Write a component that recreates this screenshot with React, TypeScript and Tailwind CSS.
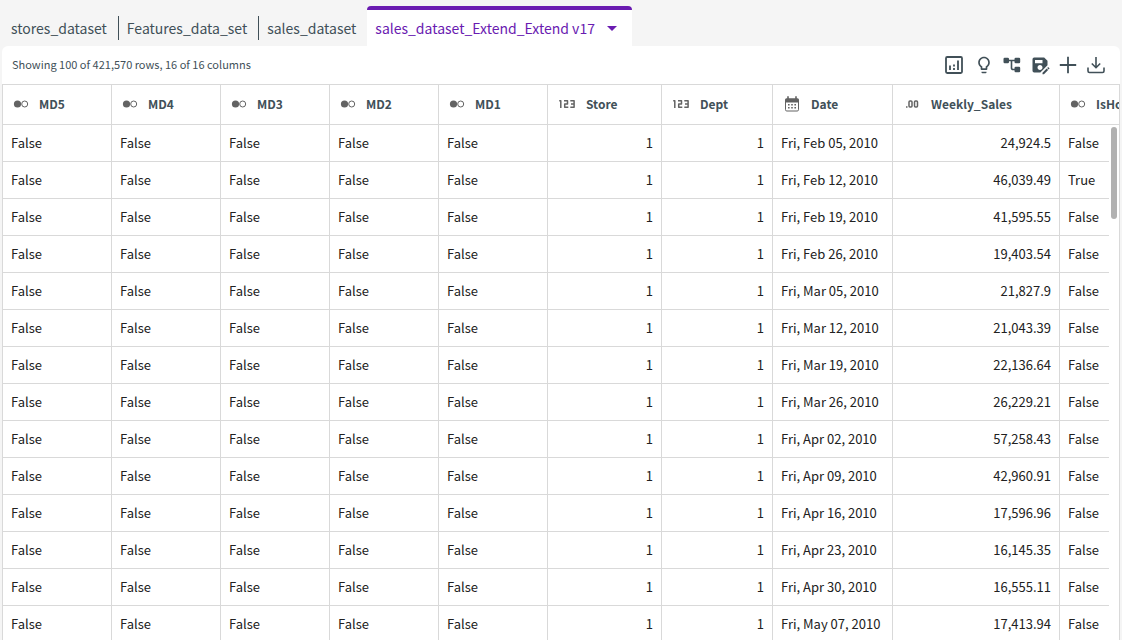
import React, { ReactNode } from "react";
import { MdLightbulbOutline, MdSaveAs } from "react-icons/md";

type ColumnType = "bool" | "int" | "float" | "date";

type Column = {
  name: string;
  type: ColumnType;
  width: string;
};

const columns: Column[] = [
  { name: "MD5", type: "bool", width: "w-[109px]" },
  { name: "MD4", type: "bool", width: "w-[109px]" },
  { name: "MD3", type: "bool", width: "w-[109px]" },
  { name: "MD2", type: "bool", width: "w-[109px]" },
  { name: "MD1", type: "bool", width: "w-[109px]" },
  { name: "Store", type: "int", width: "w-[114px]" },
  { name: "Dept", type: "int", width: "w-[111px]" },
  { name: "Date", type: "date", width: "w-[120px]" },
  { name: "Weekly_Sales", type: "float", width: "w-[167px]" },
  { name: "IsHoliday", type: "bool", width: "" },
];

const sales = [
  ["Fri, Feb 05, 2010", "24,924.5", "False"],
  ["Fri, Feb 12, 2010", "46,039.49", "True"],
  ["Fri, Feb 19, 2010", "41,595.55", "False"],
  ["Fri, Feb 26, 2010", "19,403.54", "False"],
  ["Fri, Mar 05, 2010", "21,827.9", "False"],
  ["Fri, Mar 12, 2010", "21,043.39", "False"],
  ["Fri, Mar 19, 2010", "22,136.64", "False"],
  ["Fri, Mar 26, 2010", "26,229.21", "False"],
  ["Fri, Apr 02, 2010", "57,258.43", "False"],
  ["Fri, Apr 09, 2010", "42,960.91", "False"],
  ["Fri, Apr 16, 2010", "17,596.96", "False"],
  ["Fri, Apr 23, 2010", "16,145.35", "False"],
  ["Fri, Apr 30, 2010", "16,555.11", "False"],
  ["Fri, May 07, 2010", "17,413.94", "False"],
];

const rows = sales.map(([date, amount, holiday]) => [
  "False",
  "False",
  "False",
  "False",
  "False",
  "1",
  "1",
  date,
  amount,
  holiday,
]);

const TypeIcon = ({ type }: { type: ColumnType }) => {
  if (type === "bool") {
    return (
      <svg width="20" height="14" viewBox="0 0 20 14" className="shrink-0">
        <circle cx="6.5" cy="7" r="3.6" fill="#636363" />
        <circle cx="13.7" cy="7" r="3" fill="none" stroke="#636363" />
      </svg>
    );
  }
  if (type === "date") {
    return (
      <svg width="22" height="16" viewBox="0 0 22 16" className="shrink-0" fill="#636363">
        <path d="M6.2.3h1.6v2h6.4v-2h1.600v2h.7a1.500 1.500 0 0 1 1.500 1.500V6H4V3.800a1.500 1.500 0 0 1 1.500-1.500h.7z" />
        <path d="M4.500 6h13v7.700a1.300 1.300 0 0 1-1.300 1.300H5.800a1.300 1.300 0 0 1-1.300-1.300z" fill="none" stroke="#636363" />
        <path d="M7 8h1.600v1.600H7zM10.200 8h1.600v1.600h-1.600zM13.400 8H15v1.600h-1.600zM7 11h1.600v1.600H7zM10.200 11h1.600v1.600h-1.600zM13.400 11H15v1.600h-1.600z" />
      </svg>
    );
  }
  if (type === "int") {
    return (
      <svg width="22" height="14" viewBox="0 0 22 14" className="shrink-0" fill="none" stroke="#636363" strokeWidth="1.5">
        <path d="M3.200 3.700h1.600V11M8 3.700h3.500V7H8.700v3.300h3.600M14.300 3.700h3.800v6.600h-3.800M15 7h3" strokeLinejoin="round" />
      </svg>
    );
  }
  return (
    <svg width="22" height="14" viewBox="0 0 22 14" className="shrink-0" fill="none" stroke="#636363" strokeWidth="1.5">
      <path d="M5 9.200h1.500v1.500H5z" fill="#636363" stroke="none" />
      <rect x="8" y="4" width="3" height="6" rx="1" />
      <rect x="13.500" y="4" width="3" height="6" rx="1" />
    </svg>
  );
};

const ChartIcon = () => (
  <svg width="18" height="18" viewBox="0 0 18 18" fill="none" stroke="currentColor" strokeWidth="1.8">
    <rect x="1" y="1" width="16" height="16" rx="1.2" />
    <path d="M5 9.500V14M9 12V14M9 8.500v2M13 4.500V14" />
  </svg>
);

const TreeIcon = () => (
  <svg width="18" height="16" viewBox="0 0 18 16">
    <path d="M5 3.500h7M8.500 3.500V11a1.500 1.500 0 0 0 1.500 1.500h2.500" fill="none" stroke="currentColor" strokeWidth="1.6" />
    <g fill="currentColor">
      <rect x="0.5" y="0.8" width="5.5" height="5.5" rx="1.2" />
      <rect x="11.5" y="0.8" width="5.7" height="5.5" rx="1.2" />
      <rect x="11.5" y="9.7" width="5.7" height="5.5" rx="1.2" />
    </g>
  </svg>
);

const PlusIcon = () => (
  <svg width="18" height="18" viewBox="0 0 18 18" fill="none" stroke="currentColor" strokeWidth="1.8">
    <path d="M9 .8v16.400M.8 9h16.400" />
  </svg>
);

const DownloadIcon = () => (
  <svg width="18" height="18" viewBox="0 0 18 18" fill="none" stroke="currentColor" strokeWidth="1.6">
    <path d="M9 1v10.500M4.800 7.500 9 11.700l4.200-4.200M1 11.500v3.500A1.500 1.500 0 0 0 2.500 16.500h13a1.500 1.500 0 0 0 1.500-1.500V11.500" />
  </svg>
);

type ToolButtonProps = {
  label: string;
  children: ReactNode;
};

const ToolButton = ({ label, children }: ToolButtonProps) => (
  <button aria-label={label} title={label} className="grid size-5 place-items-center first:mr-0.5">
    {children}
  </button>
);

const Tabs = () => {
  const inactive = ["stores_dataset", "Features_data_set", "sales_dataset"];
  return (
    <nav className="flex h-10 items-stretch text-sm">
      {inactive.map((tab, index) => (
        <div key={tab} className="flex items-center">
          {index > 0 && <span className="mt-1 h-6 w-px bg-[#415058]" />}
          <button className={index > 0 ? "pt-1 pr-[11px] pl-2" : "pt-1 pr-[11px] pl-[9px]"}>{tab}</button>
        </div>
      ))}
      <button className="flex items-center gap-3 rounded-t-sm border-t-4 border-[#6a1bb1] bg-white pr-[15px] pl-2 text-[#6a1bb1]">
        sales_dataset_Extend_Extend v17
        <svg width="10" height="5" viewBox="0 0 10 5" fill="currentColor">
          <path d="M0 0h10L5 5z" />
        </svg>
      </button>
    </nav>
  );
};

const Toolbar = () => (
  <div className="flex h-[38px] items-center justify-between rounded-t-md bg-white pr-3.5 pl-2.5">
    <p className="pb-0.5 text-[11px]">Showing 100 of 421,570 rows, 16 of 16 columns</p>
    <div className="flex gap-2">
      <ToolButton label="Charts">
        <ChartIcon />
      </ToolButton>
      <ToolButton label="Insights">
        <MdLightbulbOutline size={20} />
      </ToolButton>
      <ToolButton label="Pipeline">
        <TreeIcon />
      </ToolButton>
      <ToolButton label="Save as">
        <MdSaveAs size={20} />
      </ToolButton>
      <ToolButton label="Add">
        <PlusIcon />
      </ToolButton>
      <ToolButton label="Download">
        <DownloadIcon />
      </ToolButton>
    </div>
  </div>
);

const DataTable = () => (
  <div className="relative min-h-0 flex-1 overflow-hidden border border-b-0 border-[#d9d9d9] bg-white">
    <table className="w-full table-fixed border-separate border-spacing-0 text-[13px] whitespace-nowrap">
      <colgroup>
        {columns.map((column) => (
          <col key={column.name} className={column.width} />
        ))}
        {/* gutter for the scrollbar */}
        <col className="w-2.5" />
      </colgroup>
      <thead className="text-xs">
        <tr className="h-10">
          {columns.map((column, index) => (
            <th
              key={column.name}
              colSpan={index === columns.length - 1 ? 2 : 1}
              className="overflow-hidden border-r border-b border-[#d9d9d9] p-0 pb-0.5 pl-2 font-bold last:border-r-0"
            >
              <div className="flex items-center gap-2">
                <TypeIcon type={column.type} />
                {column.name}
              </div>
            </th>
          ))}
        </tr>
      </thead>
      <tbody className="text-[#212121]">
        {rows.map((row) => (
          <tr key={row[7]} className="h-[37px]">
            {row.map((value, index) => {
              const type = columns[index].type;
              const last = index === row.length - 1;
              return (
                <td
                  key={columns[index].name}
                  className={`border-b border-[#d9d9d9] px-2 py-0 ${last ? "" : "border-r"} ${
                    type === "int" || type === "float" ? "text-right" : "text-left"
                  }`}
                >
                  {value}
                </td>
              );
            })}
            <td className="p-0" />
          </tr>
        ))}
      </tbody>
    </table>
    <div className="absolute top-[42px] right-0.5 h-[92px] w-1.5 rounded-full bg-[#b1b1b1]" />
  </div>
);

const App = () => {
  return (
    <div className="flex h-screen flex-col overflow-hidden bg-[#f5f5f5] px-0.5 pt-1.5 font-['Noto_Sans_CJK_SC',sans-serif] text-[#415058]">
      <Tabs />
      <Toolbar />
      <DataTable />
    </div>
  );
};

export default App;
